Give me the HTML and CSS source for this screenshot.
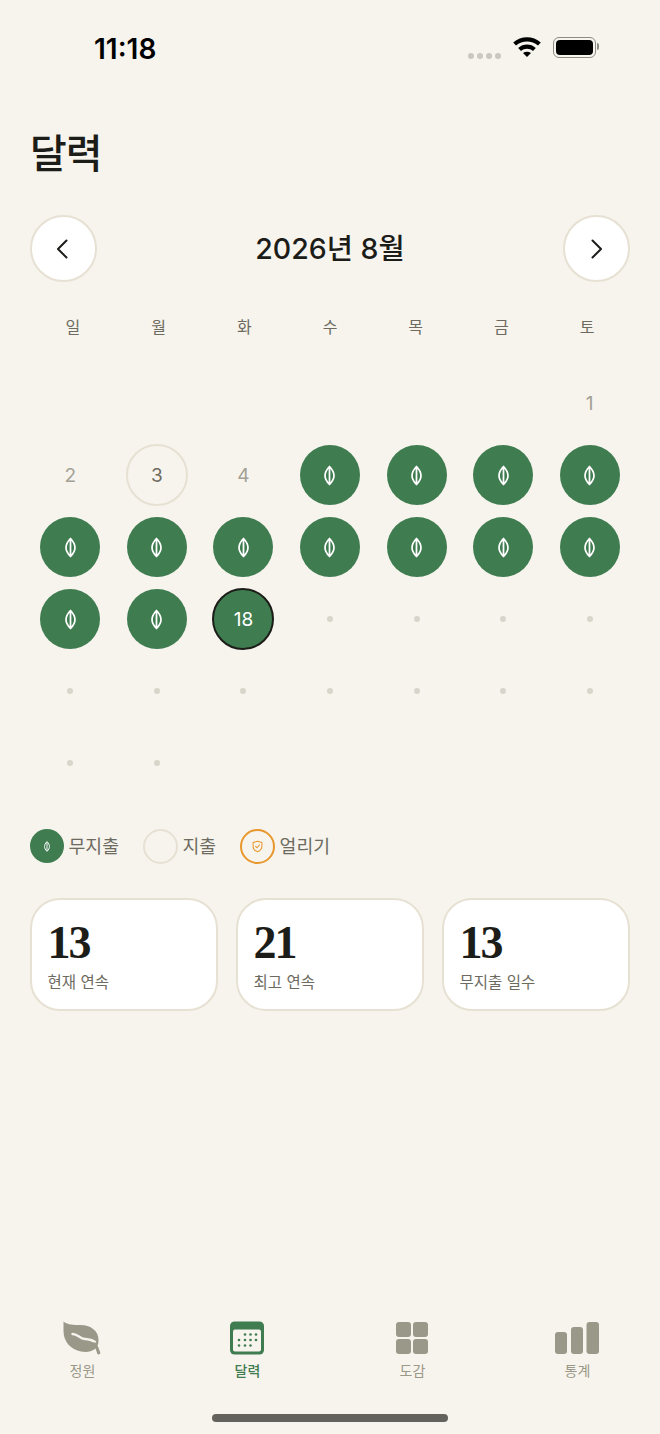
FILE: index.html
```html
<!DOCTYPE html>
<html lang="ko">
<head>
<meta charset="utf-8">
<title>달력</title>
<link rel="stylesheet" href="styles.css">
</head>
<body>
<svg class="sprites" width="0" height="0" aria-hidden="true">
  <symbol id="seed" viewBox="0 0 12 22">
    <path d="M6 1.200C2.800 4.600 1.100 7.800 1.100 11 1.100 14.400 2.800 17.500 6 20.800 9.200 17.500 10.900 14.400 10.900 11 10.900 7.800 9.200 4.600 6 1.200Z M6 2V20" fill="none" stroke="#fff" stroke-width="1.900" stroke-linejoin="round"/>
  </symbol>
</svg>
<main class="page">
  <header class="status">
    <span class="clock">11:18</span>
    <div class="status-icons">
      <span class="signal"><i></i><i></i><i></i><i></i></span>
      <svg class="wifi" viewBox="0 0 30 22" width="30" height="22">
        <path d="M1.200 7.600C9 .4 21 .4 28.800 7.600L26 10.600C19.800 5 10.200 5 4 10.600Z M6.200 12.900C11.200 8.400 18.800 8.400 23.800 12.900L21 15.900C17.600 13 12.400 13 9 15.900Z M11 18C13.400 16.200 16.600 16.200 19 18L15 22Z" fill="#000"/>
      </svg>
      <span class="battery"><i></i></span>
    </div>
  </header>

  <h1 class="title">달력</h1>

  <section class="month-nav">
    <button class="round-btn round-prev" type="button">
      <svg viewBox="0 0 12 20" width="12" height="20"><path d="M10.500 1.500 2 10l8.500 8.500" fill="none" stroke="#1c1c18" stroke-width="2" stroke-linecap="round" stroke-linejoin="round"/></svg>
    </button>
    <h2 class="month">2026년 8월</h2>
    <button class="round-btn round-next" type="button">
      <svg viewBox="0 0 12 20" width="12" height="20"><path d="M1.500 1.500 10 10l-8.500 8.500" fill="none" stroke="#1c1c18" stroke-width="2" stroke-linecap="round" stroke-linejoin="round"/></svg>
    </button>
  </section>

  <div class="weekdays">
    <span>일</span><span>월</span><span>화</span><span>수</span><span>목</span><span>금</span><span>토</span>
  </div>

  <div class="calendar">
    <div class="cell"></div><div class="cell"></div><div class="cell"></div><div class="cell"></div><div class="cell"></div><div class="cell"></div>
    <div class="cell"><span class="day past">1</span></div>

    <div class="cell"><span class="day past">2</span></div>
    <div class="cell"><span class="day spent">3</span></div>
    <div class="cell"><span class="day past">4</span></div>
    <div class="cell"><span class="day saved"><svg class="seed"><use href="#seed"/></svg></span></div>
    <div class="cell"><span class="day saved"><svg class="seed"><use href="#seed"/></svg></span></div>
    <div class="cell"><span class="day saved"><svg class="seed"><use href="#seed"/></svg></span></div>
    <div class="cell"><span class="day saved"><svg class="seed"><use href="#seed"/></svg></span></div>

    <div class="cell"><span class="day saved"><svg class="seed"><use href="#seed"/></svg></span></div>
    <div class="cell"><span class="day saved"><svg class="seed"><use href="#seed"/></svg></span></div>
    <div class="cell"><span class="day saved"><svg class="seed"><use href="#seed"/></svg></span></div>
    <div class="cell"><span class="day saved"><svg class="seed"><use href="#seed"/></svg></span></div>
    <div class="cell"><span class="day saved"><svg class="seed"><use href="#seed"/></svg></span></div>
    <div class="cell"><span class="day saved"><svg class="seed"><use href="#seed"/></svg></span></div>
    <div class="cell"><span class="day saved"><svg class="seed"><use href="#seed"/></svg></span></div>

    <div class="cell"><span class="day saved"><svg class="seed"><use href="#seed"/></svg></span></div>
    <div class="cell"><span class="day saved"><svg class="seed"><use href="#seed"/></svg></span></div>
    <div class="cell"><span class="day saved today">18</span></div>
    <div class="cell"><span class="dot"></span></div>
    <div class="cell"><span class="dot"></span></div>
    <div class="cell"><span class="dot"></span></div>
    <div class="cell"><span class="dot"></span></div>

    <div class="cell"><span class="dot"></span></div>
    <div class="cell"><span class="dot"></span></div>
    <div class="cell"><span class="dot"></span></div>
    <div class="cell"><span class="dot"></span></div>
    <div class="cell"><span class="dot"></span></div>
    <div class="cell"><span class="dot"></span></div>
    <div class="cell"><span class="dot"></span></div>

    <div class="cell"><span class="dot"></span></div>
    <div class="cell"><span class="dot"></span></div>
  </div>

  <div class="legend">
    <div class="legend-item">
      <span class="swatch swatch-saved"><svg class="seed-sm"><use href="#seed"/></svg></span>
      <span>무지출</span>
    </div>
    <div class="legend-item">
      <span class="swatch swatch-spent"></span>
      <span>지출</span>
    </div>
    <div class="legend-item">
      <span class="swatch swatch-shield">
        <svg viewBox="0 0 14 16" width="11" height="13"><path d="M7 1.200 12.600 3v4.600c0 3.400-2.300 5.800-5.600 7.200C3.700 13.400 1.400 11 1.400 7.600V3Z" fill="none" stroke="#e8972c" stroke-width="1.300" stroke-linejoin="round"/><path d="M4.600 7.800 6.300 9.600 9.600 6" fill="none" stroke="#e8972c" stroke-width="1.300" stroke-linecap="round" stroke-linejoin="round"/></svg>
      </span>
      <span>얼리기</span>
    </div>
  </div>

  <div class="stats">
    <article class="stat"><strong>13</strong><span>현재 연속</span></article>
    <article class="stat"><strong>21</strong><span>최고 연속</span></article>
    <article class="stat"><strong>13</strong><span>무지출 일수</span></article>
  </div>

  <nav class="tabs">
    <a class="tab">
      <svg viewBox="0 0 38 34" width="38" height="34">
        <path d="M.5.5C5 4 11 4 17 4 28 4 35.500 10 35.500 19c0 3-.5 5-1.500 6.500L32 28c-4 3-9 3.500-14 2.500C8 28.500.5 21 .5 10Z" fill="#9a9888"/>
        <path d="M9.500 13C15 13 16.500 17.500 22 18c4 .3 7 .8 10 3" fill="none" stroke="#f7f4ee" stroke-width="2.400" stroke-linecap="round"/>
        <path d="M31.500 23c2 2.500 3.300 5.500 4.200 8.800" fill="none" stroke="#9a9888" stroke-width="3.200" stroke-linecap="round"/>
      </svg>
      <span>정원</span>
    </a>
    <a class="tab tab-active">
      <svg viewBox="0 0 34 33" width="34" height="33">
        <rect width="34" height="33" rx="4.500" fill="#3f7c50"/>
        <rect x="3" y="8" width="28" height="22" rx="2" fill="#f7f4ee"/>
        <g fill="#3f7c50">
          <circle cx="15" cy="13" r="1.300"/><circle cx="20.500" cy="13" r="1.300"/><circle cx="26" cy="13" r="1.300"/>
          <circle cx="9" cy="18.500" r="1.300"/><circle cx="15" cy="18.500" r="1.300"/><circle cx="20.500" cy="18.500" r="1.300"/><circle cx="26" cy="18.500" r="1.300"/>
          <circle cx="9" cy="24" r="1.300"/><circle cx="15" cy="24" r="1.300"/><circle cx="20.500" cy="24" r="1.300"/>
        </g>
      </svg>
      <span>달력</span>
    </a>
    <a class="tab">
      <svg viewBox="0 0 32 32" width="32" height="32" fill="#9a9888">
        <rect width="15" height="15" rx="3"/><rect x="17" width="15" height="15" rx="3"/><rect y="17" width="15" height="15" rx="3"/><rect x="17" y="17" width="15" height="15" rx="3"/>
      </svg>
      <span>도감</span>
    </a>
    <a class="tab">
      <svg viewBox="0 0 44 32" width="44" height="32" fill="#9a9888">
        <rect y="10" width="12" height="22" rx="3"/><rect x="16" y="5" width="12" height="27" rx="3"/><rect x="31.500" width="12.500" height="32" rx="3"/>
      </svg>
      <span>통계</span>
    </a>
  </nav>

  <div class="home-bar"></div>
</main>
</body>
</html>
```

FILE: styles.css
```css
* { box-sizing: border-box; margin: 0; padding: 0; }

html, body { background: #f7f4ee; }

body {
  font-family: Inter, "Noto Sans CJK KR", sans-serif;
  color: #1c1c18;
}

.sprites { position: absolute; }

.page {
  display: flex;
  flex-direction: column;
  height: 1434px;
  overflow: hidden;
  padding-top: 30px;
}

/* status bar */
.status {
  display: flex;
  justify-content: space-between;
  align-items: center;
  height: 38px;
  padding: 0 63px 0 94px;
}

.clock { font-size: 28px; font-weight: 600; color: #000; line-height: 38px; }

.status-icons { display: flex; align-items: center; }

.signal { display: flex; gap: 3px; margin-right: 11px; margin-top: 14px; }
.signal i { width: 6px; height: 6px; border-radius: 50%; background: #c9c7c1; }

.wifi { margin-right: 11px; margin-top: -6px; }

.battery {
  position: relative;
  width: 43px;
  height: 21px;
  padding: 2px;
  border: 1.5px solid #8d8b85;
  border-radius: 6px;
  margin-right: 1px;
  margin-top: -3px;
}
.battery i { display: block; height: 100%; background: #000; border-radius: 4px; }
.battery::after {
  content: "";
  position: absolute;
  right: -4px;
  top: 5px;
  width: 2px;
  height: 7px;
  background: #8d8b85;
  border-radius: 0 2px 2px 0;
}

.title {
  font-size: 40px;
  font-weight: 500;
  line-height: 56px;
  letter-spacing: -1px;
  margin: 58px 0 0 30px;
}

/* month switcher */
.month-nav {
  display: flex;
  justify-content: space-between;
  align-items: center;
  margin: 33px 30px 0;
}

.round-btn {
  display: flex;
  align-items: center;
  justify-content: center;
  width: 67px;
  height: 67px;
  background: #fff;
  border: 2px solid #e6e1d3;
  border-radius: 50%;
}

.round-prev { padding-right: 3px; }
.round-next { padding-left: 2px; }

.month { font-size: 28.500px; font-weight: 500; line-height: 40px; }

.weekdays, .calendar {
  display: grid;
  grid-template-columns: repeat(7, 1fr);
}

.weekdays {
  margin: 33px 30px 0;
  height: 24px;
  text-align: center;
  font-size: 16px;
  line-height: 24px;
  color: #6d6b60;
}

.calendar { margin: 28px 27px 0; grid-auto-rows: 72px; }

.cell { display: flex; align-items: center; justify-content: center; }

.day {
  display: flex;
  align-items: center;
  justify-content: center;
  width: 60px;
  height: 60px;
  border-radius: 50%;
  font-size: 19px;
}

.past { color: #a3a195; }

.spent { width: 62px; height: 62px; border: 2.500px solid #e6e1d3; color: #6d6b60; }

.saved { background: #3f7c50; color: #fff; }

.today { width: 62px; height: 62px; border: 2.500px solid #1c1c18; }

.seed { width: 11px; height: 21px; }

.dot { width: 6px; height: 6px; border-radius: 50%; background: #d8d5ca; }

/* legend */
.legend { display: flex; gap: 24px; margin: 29px 30px 0; }

.legend-item {
  display: flex;
  align-items: center;
  gap: 4.500px;
  font-size: 18.300px;
  color: #6d6b60;
  line-height: 36px;
}

.swatch {
  display: flex;
  align-items: center;
  justify-content: center;
  width: 34px;
  height: 34px;
  border-radius: 50%;
}

.swatch-saved { background: #3f7c50; }
.seed-sm { width: 6px; height: 11px; }
.swatch-spent { width: 35px; height: 35px; border: 2.500px solid #e6e1d3; }
.swatch-shield { width: 35px; height: 35px; border: 2.500px solid #e8972c; }

/* summary cards */
.stats {
  display: grid;
  grid-template-columns: repeat(3, 1fr);
  gap: 18px;
  margin: 34px 30px 0;
}

.stat {
  display: flex;
  flex-direction: column;
  height: 113px;
  padding: 17px 15.500px 0;
  background: #fff;
  border: 2px solid #e6e1d3;
  border-radius: 30px;
}

.stat strong {
  font-family: "Liberation Serif", serif;
  font-size: 46px;
  font-weight: 700;
  line-height: 52px;
  letter-spacing: -2px;
}

.stat span { font-size: 15.500px; line-height: 24px; color: #6d6b60; margin-top: 2px; }

/* bottom tabs */
.tabs {
  display: grid;
  grid-template-columns: repeat(4, 1fr);
  margin: auto 0 0;
  padding: 0;
}

.tab {
  display: flex;
  flex-direction: column;
  align-items: center;
  font-size: 14px;
  line-height: 20px;
  color: #9a9888;
}

.tab svg { height: 34px; margin: 0 1.500px 6px 0; }

.tab-active { color: #3f7c50; font-weight: 500; }

.home-bar {
  width: 236px;
  height: 8px;
  margin: 33px auto 12px;
  border-radius: 4px;
  background: #64625c;
}
```
